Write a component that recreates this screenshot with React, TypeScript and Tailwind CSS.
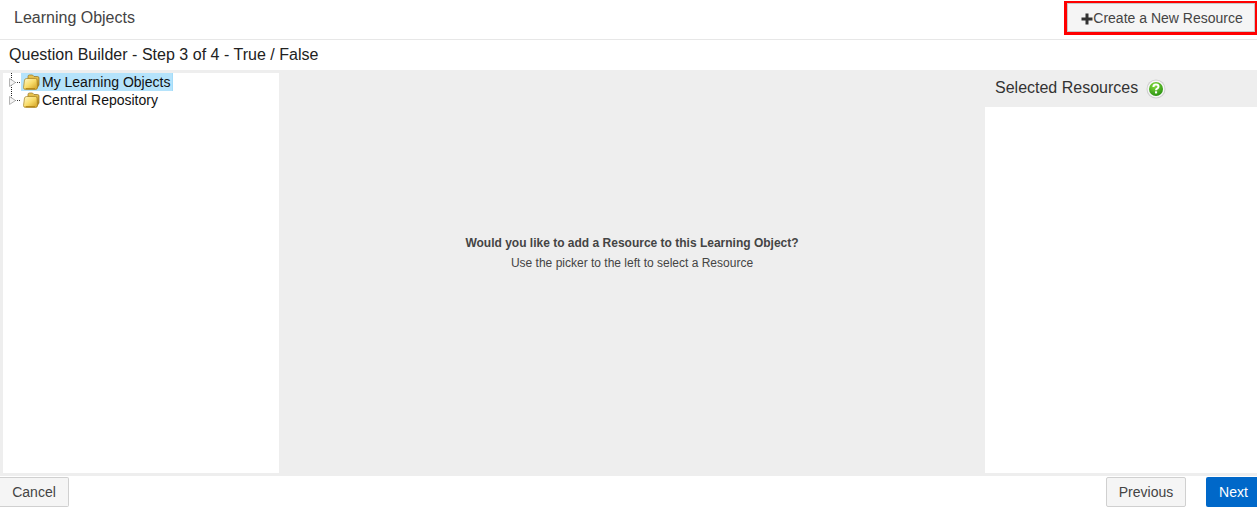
import React from 'react';

const FolderIcon: React.FC = () => (
  <svg width="18" height="17" viewBox="0 0 18 17" className="shrink-0">
    <defs>
      <linearGradient id="folderFront" x1="0" y1="0" x2="1" y2="1">
        <stop offset="0" stopColor="#fff9c9" />
        <stop offset="0.5" stopColor="#f8dc6a" />
        <stop offset="1" stopColor="#cf9c1c" />
      </linearGradient>
      <linearGradient id="folderBack" x1="0" y1="0" x2="0" y2="1">
        <stop offset="0" stopColor="#f0cc58" />
        <stop offset="1" stopColor="#a97c14" />
      </linearGradient>
    </defs>
    <path d="M6 2.5 Q6 1 7.5 1 H10.5 L12 2.5 H15.5 Q17 2.5 17 4 V11 L15 14 H6 Z" fill="url(#folderBack)" stroke="#8f6f1c" strokeWidth="0.7" />
    <path d="M2.5 6 Q3 4.5 4.5 4.5 H13.5 Q15 4.5 15 6 L15.5 13.5 Q15.5 15.5 13.5 15.5 H3.5 Q1.5 15.5 1.5 13.5 Z" fill="url(#folderFront)" stroke="#a5801f" strokeWidth="0.7" />
    <path d="M3.5 14.5 H13" stroke="#b98a1a" strokeWidth="1" />
  </svg>
);

const Expander: React.FC<{ last?: boolean }> = ({ last }) => (
  <svg width="18" height="18" viewBox="0 0 18 18" className="shrink-0">
    <path d={last ? 'M8.5 0 V10' : 'M8.5 0 V18'} stroke="#222" strokeDasharray="1 1" />
    <path d="M12 9.5 H18" stroke="#333" strokeDasharray="1 1" />
    <path d="M6.5 5.5 L12.5 9.5 L6.5 13.5 Z" fill="#f4f4f4" stroke="#b4b4b4" />
  </svg>
);

const TreeRow: React.FC<{ label: string; selected?: boolean; last?: boolean }> = ({ label, selected, last }) => (
  <div className="flex items-center h-[18px]">
    <Expander last={last} />
    <div className={`flex items-center h-[18px] pl-[1px] pr-[2px] border-r ${selected ? 'bg-[#b5e3fb] border-[#a4dcf9]' : 'border-transparent'}`}>
      <FolderIcon />
      <span className="ml-[2px] text-[14px] text-[#111]">{label}</span>
    </div>
  </div>
);

export default function App() {
  return (
    <div className="w-[1257px] h-[516px] bg-white overflow-hidden font-['Liberation_Sans',Arial,sans-serif] text-[#333]">
      {/* Top bar */}
      <div className="h-[40px] flex items-start justify-between border-b border-[#e7e7e7]">
        <div className="pl-[14px] pt-[9px] text-[16px] leading-[18px] text-[#444]">Learning Objects</div>
        <div className="mt-[1px] border-[#ff0000] border-t-2 border-b-[3px] border-l-[3px] border-r-2 h-[34px] w-[193px] flex">
          <button className="w-full h-[29px] pl-[2px] pt-[2px] bg-[#f5f5f5] border border-[#c8c8c8] text-[14px] text-[#444] flex items-center justify-center">
            <svg width="12" height="12" viewBox="0 0 12 12" className="shrink-0">
              <path d="M4.5 0.5 H7.5 V4.5 H11.5 V7.5 H7.5 V11.5 H4.5 V7.5 H0.5 V4.5 H4.5 Z" fill="#333" />
            </svg>
            Create a New Resource
          </button>
        </div>
      </div>

      {/* Step title */}
      <div className="h-[30px] pl-[9px] pt-[6px] text-[16px] leading-[18px] text-[#222] tracking-[0.02px]">
        Question Builder - Step 3 of 4 - True / False
      </div>

      {/* Main area */}
      <div className="h-[406px] bg-[#eeeeee] flex">
        <div className="w-[276px] ml-[3px] mt-[3px] h-[400px] bg-white">
          <TreeRow label="My Learning Objects" selected />
          <TreeRow label="Central Repository" last />
        </div>

        <div className="w-[706px] flex flex-col items-center pt-[165px]">
          <div className="text-[12px] leading-[16px] font-bold text-[#444]">
            Would you like to add a Resource to this Learning Object?
          </div>
          <div className="mt-[4px] text-[12px] leading-[16px] text-[#444]">
            Use the picker to the left to select a Resource
          </div>
        </div>

        <div className="w-[272px] flex flex-col">
          <div className="h-[37px] pb-[2px] flex items-center pl-[10px] text-[16px] text-[#333]">
            Selected Resources
            <svg width="20" height="20" viewBox="0 0 20 20" className="ml-[8px] mt-[2px]">
              <defs>
                <radialGradient id="helpGreen" cx="0.4" cy="0.25" r="0.85">
                  <stop offset="0" stopColor="#86dc3e" />
                  <stop offset="1" stopColor="#1f8a0c" />
                </radialGradient>
              </defs>
              <circle cx="10" cy="10" r="9.5" fill="#cfcfcf" />
              <circle cx="10" cy="10" r="8.5" fill="#f6f6f6" />
              <circle cx="10" cy="10" r="7" fill="url(#helpGreen)" />
              <path d="M7.4 8 Q7.6 5.6 10 5.6 Q12.5 5.6 12.5 7.7 Q12.5 8.9 11.1 9.6 Q10 10.2 10 11.3" fill="none" stroke="#fff" strokeWidth="2" />
              <rect x="9" y="12.3" width="2.1" height="2.1" fill="#fff" />
            </svg>
          </div>
          <div className="h-[366px] bg-white" />
        </div>
      </div>

      {/* Footer */}
      <div className="h-[40px] pt-[1px] flex items-start justify-between">
        <button className="w-[69px] h-[30px] bg-[#f5f5f5] border border-l-0 border-[#d0d0d0] rounded-r-[2px] text-[14px] text-[#444]">Cancel</button>
        <div className="flex gap-[20px]">
          <button className="w-[80px] h-[30px] bg-[#f5f5f5] border border-[#d0d0d0] rounded-[2px] text-[14px] text-[#444]">Previous</button>
          <button className="w-[51px] h-[30px] pl-[4px] bg-[#0068c9] rounded-l-[2px] text-[14px] text-white">Next</button>
        </div>
      </div>
    </div>
  );
}
